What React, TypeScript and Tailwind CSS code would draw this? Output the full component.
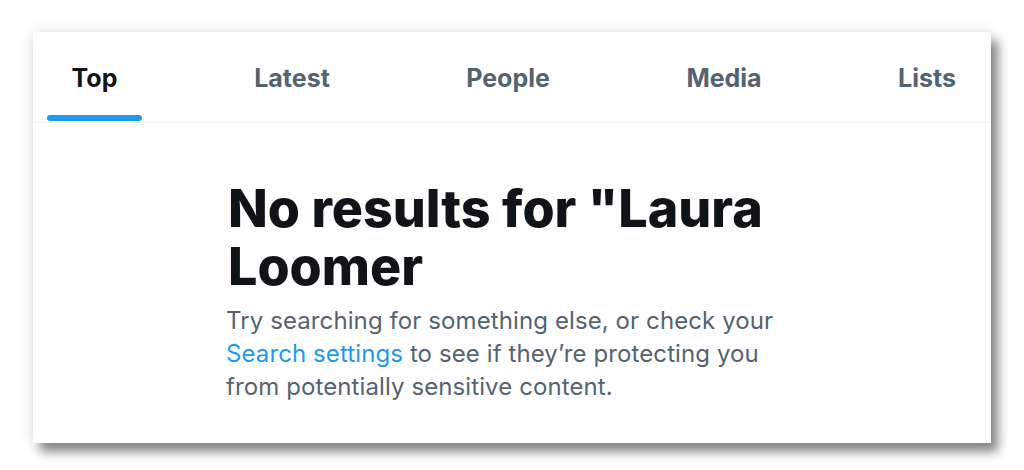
export default function App() {
  const tabs = [
    { label: "Top", active: true, cls: "w-[95px]" },
    { label: "Latest", active: false, cls: "ml-[90px] w-[120px]" },
    { label: "People", active: false, cls: "ml-[96px] w-[120px]" },
    { label: "Media", active: false, cls: "ml-[96px] w-[120px]" },
    { label: "Lists", active: false, cls: "ml-[83px] w-[120px]" },
  ];

  return (
    <div className="w-[1024px] h-[470px] bg-white pt-[32px] pl-[33px] font-['Inter',sans-serif]">
      <div className="w-[958px] h-[411px] bg-white shadow-[7px_9px_10px_rgba(0,0,0,0.45),0_0_14px_rgba(0,0,0,0.12)] flex flex-col">
        <div className="flex h-[91px] border-b border-[#eff3f4] pl-[14px]">
          {tabs.map((t) => (
            <div key={t.label} className={`${t.cls} flex flex-col items-center`}>
              <div
                className={`flex-1 flex items-center pt-[10px] text-[25px] font-bold ${
                  t.active ? "text-[#0f1419]" : "text-[#536471]"
                }`}
              >
                {t.label}
              </div>
              {t.active ? (
                <div className="w-full h-[6px] mb-[1px] rounded-full bg-[#1d9bf0]" />
              ) : (
                <div className="h-[7px]" />
              )}
            </div>
          ))}
        </div>
        <div className="pl-[195px] pt-[57px]">
          <h1 className="text-[52px] leading-[58px] font-extrabold text-[#0f1419] w-[580px]">
            No results for "Laura Loomer
          </h1>
          <p className="mt-[8px] -ml-[2px] text-[24px] leading-[33px] tracking-[0.1px] text-[#536471] w-[570px]">
            Try searching for something else, or check your{" "}
            <span className="text-[#1d9bf0]">Search settings</span> to see if they’re protecting you
            <br />
            from potentially sensitive content.
          </p>
        </div>
      </div>
    </div>
  );
}
